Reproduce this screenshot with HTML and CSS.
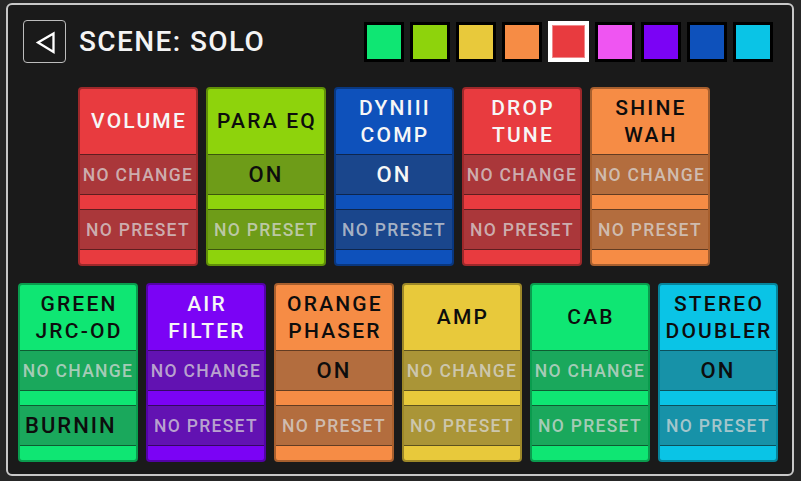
FILE: index.html
```html
<!DOCTYPE html>
<html>
<head>
<meta charset="utf-8">
<link rel="stylesheet" href="styles.css">
</head>
<body>
<div class="frame">
  <header class="top">
    <button class="back" aria-label="Back">
      <svg width="41" height="41" viewBox="0 0 41 41"><polygon points="14,21.5 29.5,12.5 29.5,31" fill="none" stroke="#fff" stroke-width="2.3" stroke-linejoin="miter"/></svg>
    </button>
    <h1 class="title">SCENE: SOLO</h1>
    <div class="swatches">
      <span class="sw c-green"></span>
      <span class="sw c-lime"></span>
      <span class="sw c-yellow"></span>
      <span class="sw c-orange"></span>
      <span class="sw c-red sel"></span>
      <span class="sw c-pink"></span>
      <span class="sw c-purple"></span>
      <span class="sw c-blue"></span>
      <span class="sw c-cyan"></span>
    </div>
  </header>
  <main class="rows">
    <div class="row row-top">
      <div class="card c-red t-light">
        <div class="name">VOLUME</div>
        <div class="band"><span class="muted">NO CHANGE</span></div>
        <div class="strip"></div>
        <div class="band"><span class="muted">NO PRESET</span></div>
        <div class="strip"></div>
      </div>
      <div class="card c-lime t-dark">
        <div class="name">PARA EQ</div>
        <div class="band"><span class="on">ON</span></div>
        <div class="strip"></div>
        <div class="band"><span class="muted">NO PRESET</span></div>
        <div class="strip"></div>
      </div>
      <div class="card c-blue t-light">
        <div class="name">DYNIII<br>COMP</div>
        <div class="band"><span class="on">ON</span></div>
        <div class="strip"></div>
        <div class="band"><span class="muted">NO PRESET</span></div>
        <div class="strip"></div>
      </div>
      <div class="card c-red t-light">
        <div class="name">DROP<br>TUNE</div>
        <div class="band"><span class="muted">NO CHANGE</span></div>
        <div class="strip"></div>
        <div class="band"><span class="muted">NO PRESET</span></div>
        <div class="strip"></div>
      </div>
      <div class="card c-orange t-dark">
        <div class="name">SHINE<br>WAH</div>
        <div class="band"><span class="muted">NO CHANGE</span></div>
        <div class="strip"></div>
        <div class="band"><span class="muted">NO PRESET</span></div>
        <div class="strip"></div>
      </div>
    </div>
    <div class="row">
      <div class="card c-green t-dark">
        <div class="name">GREEN<br>JRC-OD</div>
        <div class="band"><span class="muted">NO CHANGE</span></div>
        <div class="strip"></div>
        <div class="band band-left"><span class="on">BURNIN</span></div>
        <div class="strip"></div>
      </div>
      <div class="card c-purple t-light">
        <div class="name">AIR<br>FILTER</div>
        <div class="band"><span class="muted">NO CHANGE</span></div>
        <div class="strip"></div>
        <div class="band"><span class="muted">NO PRESET</span></div>
        <div class="strip"></div>
      </div>
      <div class="card c-orange t-dark">
        <div class="name">ORANGE<br>PHASER</div>
        <div class="band"><span class="on">ON</span></div>
        <div class="strip"></div>
        <div class="band"><span class="muted">NO PRESET</span></div>
        <div class="strip"></div>
      </div>
      <div class="card c-yellow t-dark">
        <div class="name">AMP</div>
        <div class="band"><span class="muted">NO CHANGE</span></div>
        <div class="strip"></div>
        <div class="band"><span class="muted">NO PRESET</span></div>
        <div class="strip"></div>
      </div>
      <div class="card c-green t-dark">
        <div class="name">CAB</div>
        <div class="band"><span class="muted">NO CHANGE</span></div>
        <div class="strip"></div>
        <div class="band"><span class="muted">NO PRESET</span></div>
        <div class="strip"></div>
      </div>
      <div class="card c-cyan t-dark">
        <div class="name">STEREO<br>DOUBLER</div>
        <div class="band"><span class="on">ON</span></div>
        <div class="strip"></div>
        <div class="band"><span class="muted">NO PRESET</span></div>
        <div class="strip"></div>
      </div>
    </div>
  </main>
</div>
</body>
</html>
```
FILE: styles.css
```css
* { box-sizing: border-box; }
html, body { margin: 0; padding: 0; }
body {
  width: 801px;
  height: 481px;
  background: #262626;
  font-family: Roboto, "Liberation Sans", sans-serif;
  overflow: hidden;
}
.frame {
  margin: 3px 0 0 6px;
  width: 788px;
  height: 473px;
  border: 2px solid #c8c8c8;
  border-radius: 6px;
  background: #1a1a1a;
}
.top {
  display: flex;
  align-items: center;
  padding: 15px 19px 0 15px;
  height: 58px;
}
.back {
  width: 43px;
  height: 43px;
  padding: 0;
  border: 1px solid #bdbdbd;
  border-radius: 4px;
  background: transparent;
  display: flex;
  align-items: center;
  justify-content: center;
}
.back svg { display: block; }
.title {
  margin: 0 0 0 13px;
  color: #f4f4f4;
  font-size: 28px;
  font-weight: 500;
  letter-spacing: 1.4px;
  line-height: 43px;
}
.swatches {
  margin-left: auto;
  display: flex;
  gap: 6px;
  align-items: center;
}
.sw {
  width: 40px;
  height: 40px;
  border: 3px solid #000;
}
.sw.sel {
  width: 41px;
  height: 41px;
  border: 4px solid #fff;
  box-shadow: inset 0 0 0 1px #f08a8c;
}

.c-green { background: #0fe673; }
.c-lime { background: #8ed30c; }
.c-yellow { background: #e8c93b; }
.c-orange { background: #f68c45; }
.c-red { background: #e83b3f; }
.c-pink { background: #ef55f2; }
.c-purple { background: #7b03f5; }
.c-blue { background: #0e51bb; }
.c-cyan { background: #0ac4e6; }

.rows {
  padding: 24px 14px 0 10px;
  display: flex;
  flex-direction: column;
  gap: 17px;
}
.row {
  display: flex;
  gap: 8px;
  justify-content: center;
}
.row-top { padding-right: 8px; }
.card {
  width: 120px;
  height: 179px;
  border: 2px solid rgba(0, 0, 0, 0.32);
  border-radius: 4px;
  display: flex;
  flex-direction: column;
  overflow: hidden;
}
.t-light { color: #f6f6f6; }
.t-dark { color: #0d0d0d; }
.name {
  height: 65px;
  display: flex;
  align-items: center;
  justify-content: center;
  text-align: center;
  font-size: 21px;
  font-weight: 500;
  letter-spacing: 2.2px;
  line-height: 27px;
  padding-left: 2px;
}
.band {
  height: 41px;
  border-top: 1px solid rgba(0, 0, 0, 0.45);
  border-bottom: 1px solid rgba(0, 0, 0, 0.45);
  background: rgba(50, 50, 50, 0.34);
  display: flex;
  align-items: center;
  justify-content: center;
  white-space: nowrap;
}
.band-left { justify-content: flex-start; padding-left: 5px; }
.strip { flex: 1; }
.muted {
  color: rgba(218, 218, 218, 0.74);
  font-size: 17.5px;
  font-weight: 500;
  letter-spacing: 1.3px;
}
.on {
  font-size: 22px;
  font-weight: 500;
  letter-spacing: 2px;
}
```
